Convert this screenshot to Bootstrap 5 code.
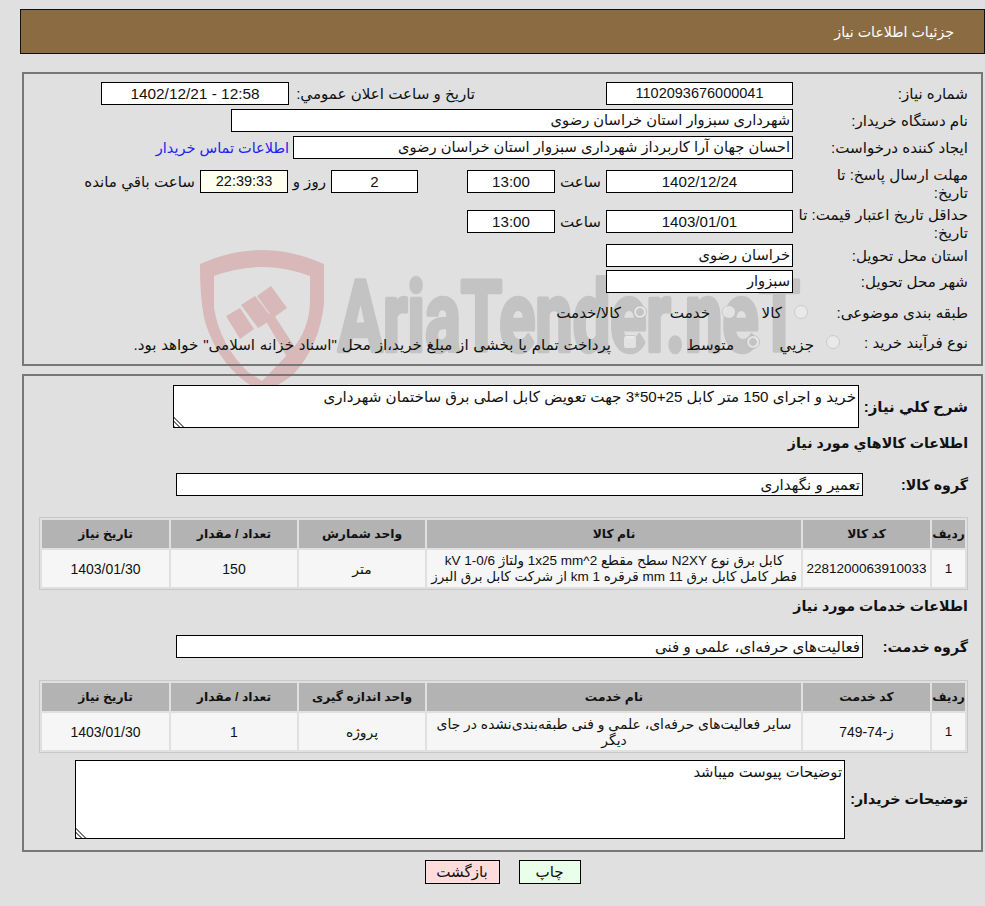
<!DOCTYPE html>
<html lang="fa" dir="rtl">
<head>
<meta charset="utf-8">
<title>جزئیات اطلاعات نیاز</title>
<link href="https://cdn.jsdelivr.net/npm/bootstrap@5.3.0/dist/css/bootstrap.min.css" rel="stylesheet">
<style>
html,body{background:#e0e0e0;}
body{font-family:"Liberation Sans","DejaVu Sans",sans-serif;font-size:15.1px;color:#111;height:906px;overflow:hidden;position:relative;line-height:18px;}
.wm{position:absolute;left:0;top:0;z-index:0;pointer-events:none;direction:ltr;}
.wm text{font-family:Roboto,"Liberation Sans",sans-serif;font-weight:700;font-size:98px;fill:#c3c3c3;stroke:#c3c3c3;stroke-width:4.5px;stroke-linejoin:round;direction:ltr;unicode-bidi:bidi-override;}
.pagewrap{position:relative;z-index:1;padding:9px 0 0 20px;}
.topbar{height:45px;background:#8b6c42;border:1px solid #111;color:#fff;font-size:14.2px;padding-right:30px;}
.pane{border:2px solid #777;margin:0 2px;}
.pane1{margin-top:18px;height:294px;padding:8px 13px 0 0;}
.pane2{margin-top:8px;height:478px;padding:9px 13px 0 0;}
.fbox{height:23px;border:1px solid #000;background:#fff;line-height:21px;padding:0 2px;white-space:nowrap;overflow:hidden;flex:none;font-size:14.7px;}
.fcenter{text-align:center;}
.numf{font-size:14.5px;}
.numd{font-size:15.1px;}
.numw{font-size:15.4px;}
.flbl{width:175px;flex:none;}
.w187{width:187px;}.w188{width:188px;}.w88{width:88px;}.w87{width:87px;}.w562{width:562px;}.w500{width:500px;}
.stamp{background:#fffff0;}
.rowbase{height:27px;}
.rowtall{height:40px;}
.rowtall2{height:34px;}
.rowmid{height:26px;}
.rowrad{height:30px;}
.rowcity{height:27px;}
.lblm{margin-top:3px;}
.tallm{margin-top:-4px;}
.ml4{margin-right:5px;}
.gap131{margin-right:131px;width:181px;text-align:right;flex:none;white-space:nowrap;}
.bluelnk{color:#2222ee;text-decoration:none;margin-right:4px;font-size:14.5px;}
.boldl{font-weight:700;font-size:14.2px;}
.boldb{font-size:15px;}
.ta{border:1px solid #000;background:#fff;color:#111;padding:2px;margin:0;display:block;outline:none;font-family:inherit;font-size:15.1px;line-height:18px;flex:none;border-radius:0;}
.ta::-webkit-resizer{background:linear-gradient(to top right,transparent 38%,#fff 38%),repeating-linear-gradient(45deg,#777 0 1.4px,transparent 1.4px 3px);}
.ta1{width:686px;height:43px;}
.ta2{width:770px;height:79px;font-size:14.7px;}
.s1{height:43px;}
.lbl1{width:109px;flex:none;padding-top:13px;}
.hd2{height:18px;margin-top:6px;}
.lblg{width:105px;flex:none;}
.gbox{width:687px;font-size:15.1px;}
.s2{height:23px;margin-top:21px;}
.gridt{border-collapse:separate;border-spacing:2px;table-layout:fixed;width:929px;border:1px solid #c8c8c8;font-size:13.9px;line-height:16px;}
.gridt th{background:#b3b3b3;height:28px;text-align:center;font-weight:700;font-size:12.3px;padding:0;color:#111;}
.gridt td{background:#f6f6f6;height:37px;text-align:center;padding:0 2px;vertical-align:middle;color:#111;}
.gridt td.numc{font-size:13.5px;}
.gridt td.numt{font-size:14px;}
.gridt td.descl{font-size:13.5px;white-space:nowrap;padding:0;}
.c1{width:33px;}.c2{width:127px;}.c3{width:374px;}.c4{width:126px;}.c5{width:126px;}.c6{width:127px;}
.t1{margin-top:21px;}
.t2{margin-top:22px;}
.hd3{height:18px;margin-top:7px;}
.s3{height:23px;margin-top:20px;}
.s4{height:80px;margin-top:7px;}
.lbl4{width:123px;flex:none;padding-top:30px;}
.acts{margin-top:8px;gap:19px;width:965px;}
.actbtn{border:1px solid #000;border-radius:0;height:24px;padding:0;line-height:22px;font-size:15.1px;color:#111;font-family:inherit;}
.actp{width:62px;background:#eaffea;}
.actr{width:75px;background:#ffdcdc;}
.form-check-input.rad{width:14px;height:14px;margin:0;flex:none;background-color:#ededed;border:1px solid #c2c2c2;opacity:.75;float:none;}
.form-check-input.rad:checked{background-color:#ededed;border-color:#b5b5b5;background-image:radial-gradient(circle,#c4c4c4 0 3.5px,#ededed 4px);}
.form-check-input.chk:checked{background-color:#ededed;border-color:#c2c2c2;background-image:none;border-radius:3px;}
.optg{display:flex;align-items:center;gap:12px;flex:none;}
.optg.lo1 span{margin-top:2px;}
.optg.lo2 span{margin-top:6px;}
.w-opt1{width:72px;}.w-opt2{width:89px;}
.w-opt3{width:80px;}.w-opt4{width:123px;}
.lbl8{width:160px;flex:none;margin-top:2px;}
.lbl9{width:128px;flex:none;margin-top:2px;}
.pl-note{flex:none;white-space:nowrap;word-spacing:.6px;}
.unit1{width:51px;padding-right:5px;}
.spc49{width:49px;}
.unit2{width:43px;padding-right:5px;}
.unit3{padding-right:5px;white-space:nowrap;}
</style>
</head>
<body>
<svg class="wm" width="985" height="906" viewBox="0 0 985 906" aria-hidden="true">
  <path fill="#d8b8b8" fill-rule="evenodd" d="M200 264 Q262 236 324 264 L324 303 Q320 345 293 375 L272 389 L262 392 Q222 372 206 325 Q200 305 200 264Z M214 276 L214 308 Q220 345 248 372 L262 381 L290 352 Q310 330 310 300 L310 276 Q262 258 214 276Z"/>
  <g fill="#d8b8b8">
    <polygon points="226,316 240,308 254,329 240,339"/>
    <polygon points="241,305 255,296 273,319 258,328"/>
    <polygon points="257,296 271,286 287,308 273,318"/>
    <polygon points="264,318 272,312 300,355 290,362"/>
  </g>
  <text x="338" y="351" textLength="462" lengthAdjust="spacingAndGlyphs">AriaTender.neT</text>
</svg>
<div class="pagewrap">
  <div class="topbar d-flex align-items-center">جزئیات اطلاعات نیاز</div>

  <div class="pane pane1">
    <div class="d-flex rowbase">
      <div class="flbl lblm">شماره نیاز:</div>
      <div class="fbox fcenter w187 numf">1102093676000041</div>
      <div class="gap131 lblm">تاریخ و ساعت اعلان عمومي:</div>
      <div class="fbox fcenter w188 numw ml4">12:58 - 1402/12/21</div>
    </div>
    <div class="d-flex rowbase">
      <div class="flbl lblm">نام دستگاه خریدار:</div>
      <div class="fbox w562">شهرداری سبزوار استان خراسان رضوی</div>
    </div>
    <div class="d-flex rowtall2">
      <div class="flbl lblm">ایجاد کننده درخواست:</div>
      <div class="fbox w500">احسان جهان آرا کاربرداز شهرداری سبزوار استان خراسان رضوی</div>
      <a class="bluelnk lblm" href="#">اطلاعات تماس خریدار</a>
    </div>
    <div class="d-flex rowtall">
      <div class="flbl tallm">مهلت ارسال پاسخ: تا<br>تاریخ:</div>
      <div class="fbox fcenter w187 numd">1402/12/24</div>
      <div class="lblm unit1">ساعت</div>
      <div class="fbox fcenter w88 numd">13:00</div>
      <div class="spc49"></div>
      <div class="fbox fcenter w87 numd">2</div>
      <div class="lblm unit2">روز و</div>
      <div class="fbox fcenter w88 numf stamp">22:39:33</div>
      <div class="lblm unit3">ساعت باقي مانده</div>
    </div>
    <div class="d-flex rowtall2">
      <div class="flbl tallm">حداقل تاریخ اعتبار قیمت: تا<br>تاریخ:</div>
      <div class="fbox fcenter w187 numd">1403/01/01</div>
      <div class="lblm unit1">ساعت</div>
      <div class="fbox fcenter w88 numd">13:00</div>
    </div>
    <div class="d-flex rowmid">
      <div class="flbl lblm">استان محل تحویل:</div>
      <div class="fbox w187">خراسان رضوی</div>
    </div>
    <div class="d-flex rowcity">
      <div class="flbl lblm">شهر محل تحویل:</div>
      <div class="fbox w187">سبزوار</div>
    </div>
    <div class="d-flex align-items-center rowrad">
      <div class="lbl8">طبقه بندی موضوعی:</div>
      <div class="optg lo1 w-opt1"><input class="form-check-input rad" type="radio" disabled name="a"><span>کالا</span></div>
      <div class="optg lo1 w-opt2"><input class="form-check-input rad" type="radio" disabled name="a"><span>خدمت</span></div>
      <div class="optg lo1"><input class="form-check-input rad" type="radio" checked disabled name="a"><span>کالا/خدمت</span></div>
    </div>
    <div class="d-flex align-items-center rowrad">
      <div class="lbl9">نوع فرآیند خرید :</div>
      <div class="optg lo2 w-opt3"><input class="form-check-input rad" type="radio" disabled name="b"><span>جزيي</span></div>
      <div class="optg lo2 w-opt4"><input class="form-check-input rad" type="radio" checked disabled name="b"><span>متوسط</span></div>
      <div class="optg lo2"><input class="form-check-input rad chk" type="checkbox" checked disabled><span class="pl-note">پرداخت تمام یا بخشی از مبلغ خرید،از محل "اسناد خزانه اسلامی" خواهد بود.</span></div>
    </div>
  </div>

  <div class="pane pane2">
    <div class="d-flex s1">
      <div class="lbl1 boldl boldb">شرح کلي نیاز:</div>
      <textarea class="ta ta1" readonly>خرید و اجرای 150 متر کابل 25+50*3 جهت تعویض کابل اصلی برق ساختمان شهرداری</textarea>
    </div>
    <div class="boldl hd2">اطلاعات کالاهاي مورد نیاز</div>
    <div class="d-flex s2">
      <div class="lblg boldl lblm">گروه کالا:</div>
      <div class="fbox gbox">تعمیر و نگهداری</div>
    </div>
    <table class="gridt t1">
      <colgroup><col class="c1"><col class="c2"><col class="c3"><col class="c4"><col class="c5"><col class="c6"></colgroup>
      <thead><tr><th>ردیف</th><th>کد کالا</th><th>نام کالا</th><th>واحد شمارش</th><th>تعداد / مقدار</th><th>تاریخ نیاز</th></tr></thead>
      <tbody><tr><td class="numc">1</td><td class="numc">2281200063910033</td><td class="descl">کابل برق نوع N2XY سطح مقطع 1x25 mm^2 ولتاژ kV 1-0/6<br>قطر کامل کابل برق mm 11 قرقره km 1 از شرکت کابل برق البرز</td><td>متر</td><td class="numt">150</td><td class="numt">1403/01/30</td></tr></tbody>
    </table>
    <div class="boldl hd3">اطلاعات خدمات مورد نیاز</div>
    <div class="d-flex s3">
      <div class="lblg boldl lblm">گروه خدمت:</div>
      <div class="fbox gbox">فعالیت‌های حرفه‌ای، علمی و فنی</div>
    </div>
    <table class="gridt t2">
      <colgroup><col class="c1"><col class="c2"><col class="c3"><col class="c4"><col class="c5"><col class="c6"></colgroup>
      <thead><tr><th>ردیف</th><th>کد خدمت</th><th>نام خدمت</th><th>واحد اندازه گیری</th><th>تعداد / مقدار</th><th>تاریخ نیاز</th></tr></thead>
      <tbody><tr><td class="numc">1</td><td>ز-74-749</td><td>سایر فعالیت‌های حرفه‌ای، علمی و فنی طبقه‌بندی‌نشده در جای<br>دیگر</td><td>پروژه</td><td class="numt">1</td><td class="numt">1403/01/30</td></tr></tbody>
    </table>
    <div class="d-flex s4">
      <div class="lbl4 boldl">توضیحات خریدار:</div>
      <textarea class="ta ta2" readonly>توضیحات پیوست میباشد</textarea>
    </div>
  </div>

  <div class="d-flex justify-content-center acts">
    <button type="button" class="btn actbtn actp">چاپ</button>
    <button type="button" class="btn actbtn actr">بازگشت</button>
  </div>
</div>
</body>
</html>
